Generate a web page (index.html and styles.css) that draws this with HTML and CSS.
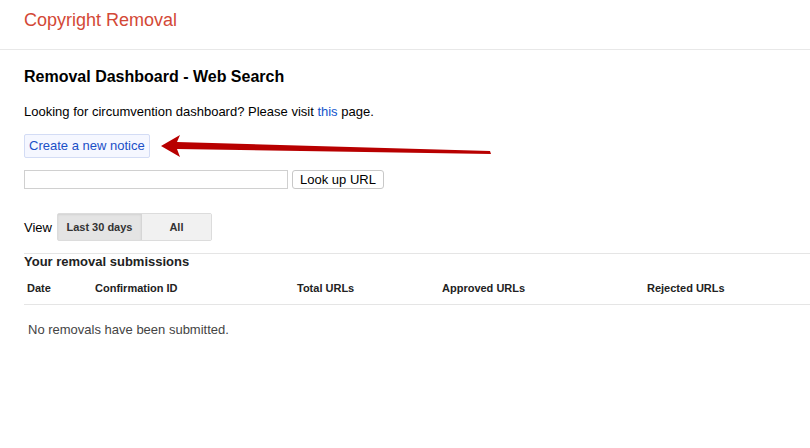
FILE: index.html
```html
<html>
<head>
<link rel="stylesheet" href="styles.css">
</head>
<body>

	<!--header-->
	<div class="header">
		<span class="productName">Copyright Removal</span>
	</div>

	<div class="content">
		<h1 class="pageTitle">Removal Dashboard - Web Search</h1>

		<p class="note">Looking for circumvention dashboard? Please visit <a href="#">this</a> page.</p>

		<div class="noticeRow">
			<a class="noticeButton" href="#">Create a new notice</a>
			<svg class="arrow" width="350" height="30" viewBox="0 0 350 30">
				<path d="M1 14 L20 3 L17 10 L330 19 L331 22 L17 17 L20 25 Z" fill="#b80000"/>
			</svg>
		</div>

		<div class="lookupRow">
			<input class="urlInput" type="text">
			<button class="lookupButton">Look up URL</button>
		</div>

		<div class="viewRow">
			<span class="viewLabel">View</span>
			<div class="segmented">
				<span class="segment segOn">Last 30 days</span>
				<span class="segment">All</span>
			</div>
		</div>

		<div class="submissions">
			<div class="subTitle">Your removal submissions</div>
			<table class="subTable" cellspacing="0">
				<tr>
					<th class="colDate">Date</th>
					<th class="colId">Confirmation ID</th>
					<th class="colTotal">Total URLs</th>
					<th class="colApproved">Approved URLs</th>
					<th>Rejected URLs</th>
				</tr>
			</table>
			<div class="emptyMsg">No removals have been submitted.</div>
		</div>
	</div>

</body>
</html>
```

FILE: styles.css
```css
body {
	margin: 0;
	font-family: "Liberation Sans", Arial, sans-serif;
	font-size: 13px;
	color: #000;
	background: #fff;
}

.header {
	height: 50px;
	border-bottom: 1px solid #e8e8e8;
	padding-left: 24px;
	box-sizing: border-box;
}

.productName {
	display: inline-block;
	padding-top: 10px;
	font-size: 18px;
	color: #d34836;
}

.content {
	padding-left: 24px;
}

.pageTitle {
	margin: 17px 0 0 0;
	font-size: 16px;
	font-weight: bold;
	line-height: 20px;
}

.note {
	margin: 17px 0 0 0;
	line-height: 16px;
}

.note a {
	color: #1155cc;
	text-decoration: none;
}

.noticeRow {
	position: relative;
	margin-top: 14px;
	height: 24px;
}

.noticeButton {
	display: inline-block;
	height: 22px;
	line-height: 22px;
	padding: 0 4px;
	border: 1px solid #d3dcf5;
	border-radius: 2px;
	background: #f5f7ff;
	color: #1a4fc7;
	text-decoration: none;
}

.arrow {
	position: absolute;
	left: 136px;
	top: -2px;
}

.lookupRow {
	display: flex;
	gap: 4px;
	margin-top: 12px;
	height: 19px;
}

.urlInput {
	width: 264px;
	height: 19px;
	box-sizing: border-box;
	border: 1px solid #d0d0d0;
	margin: 0;
	padding: 0 3px;
}

.lookupButton {
	width: 92px;
	height: 19px;
	box-sizing: border-box;
	border: 1px solid #c8c8c8;
	border-radius: 3px;
	background: #fff;
	font-family: "Liberation Sans", Arial, sans-serif;
	font-size: 13px;
	padding: 0;
	margin: 0;
}

.viewRow {
	display: flex;
	align-items: center;
	gap: 5px;
	margin-top: 24px;
}

.viewLabel {
	font-size: 13px;
}

.segmented {
	display: flex;
	border: 1px solid #dcdcdc;
	border-radius: 2px;
	height: 28px;
	box-sizing: border-box;
}

.segment {
	display: flex;
	align-items: center;
	justify-content: center;
	width: 69px;
	background: #f1f1f1;
	font-size: 11px;
	font-weight: bold;
	color: #333;
}

.segOn {
	width: 83px;
	background: #e4e4e4;
	border-right: 1px solid #d6d6d6;
	box-shadow: inset 0 1px 2px rgba(0,0,0,0.08);
}

.submissions {
	margin-top: 12px;
	border-top: 1px solid #e5e5e5;
}

.subTitle {
	margin-top: 0;
	padding-top: 1px;
	font-size: 13px;
	font-weight: bold;
	color: #222;
	line-height: 14px;
}

.subTable {
	width: 100%;
	margin-top: 12px;
	border-collapse: collapse;
}

.subTable th {
	text-align: left;
	font-size: 11px;
	font-weight: bold;
	color: #222;
	padding: 0 0 9px 3px;
	border-bottom: 1px solid #e5e5e5;
	line-height: 14px;
}

.colDate { width: 65px; }
.colId { width: 199px; }
.colTotal { width: 142px; }
.colApproved { width: 202px; }

.emptyMsg {
	margin-top: 17px;
	padding-left: 4px;
	color: #444;
	font-size: 13px;
}
```
